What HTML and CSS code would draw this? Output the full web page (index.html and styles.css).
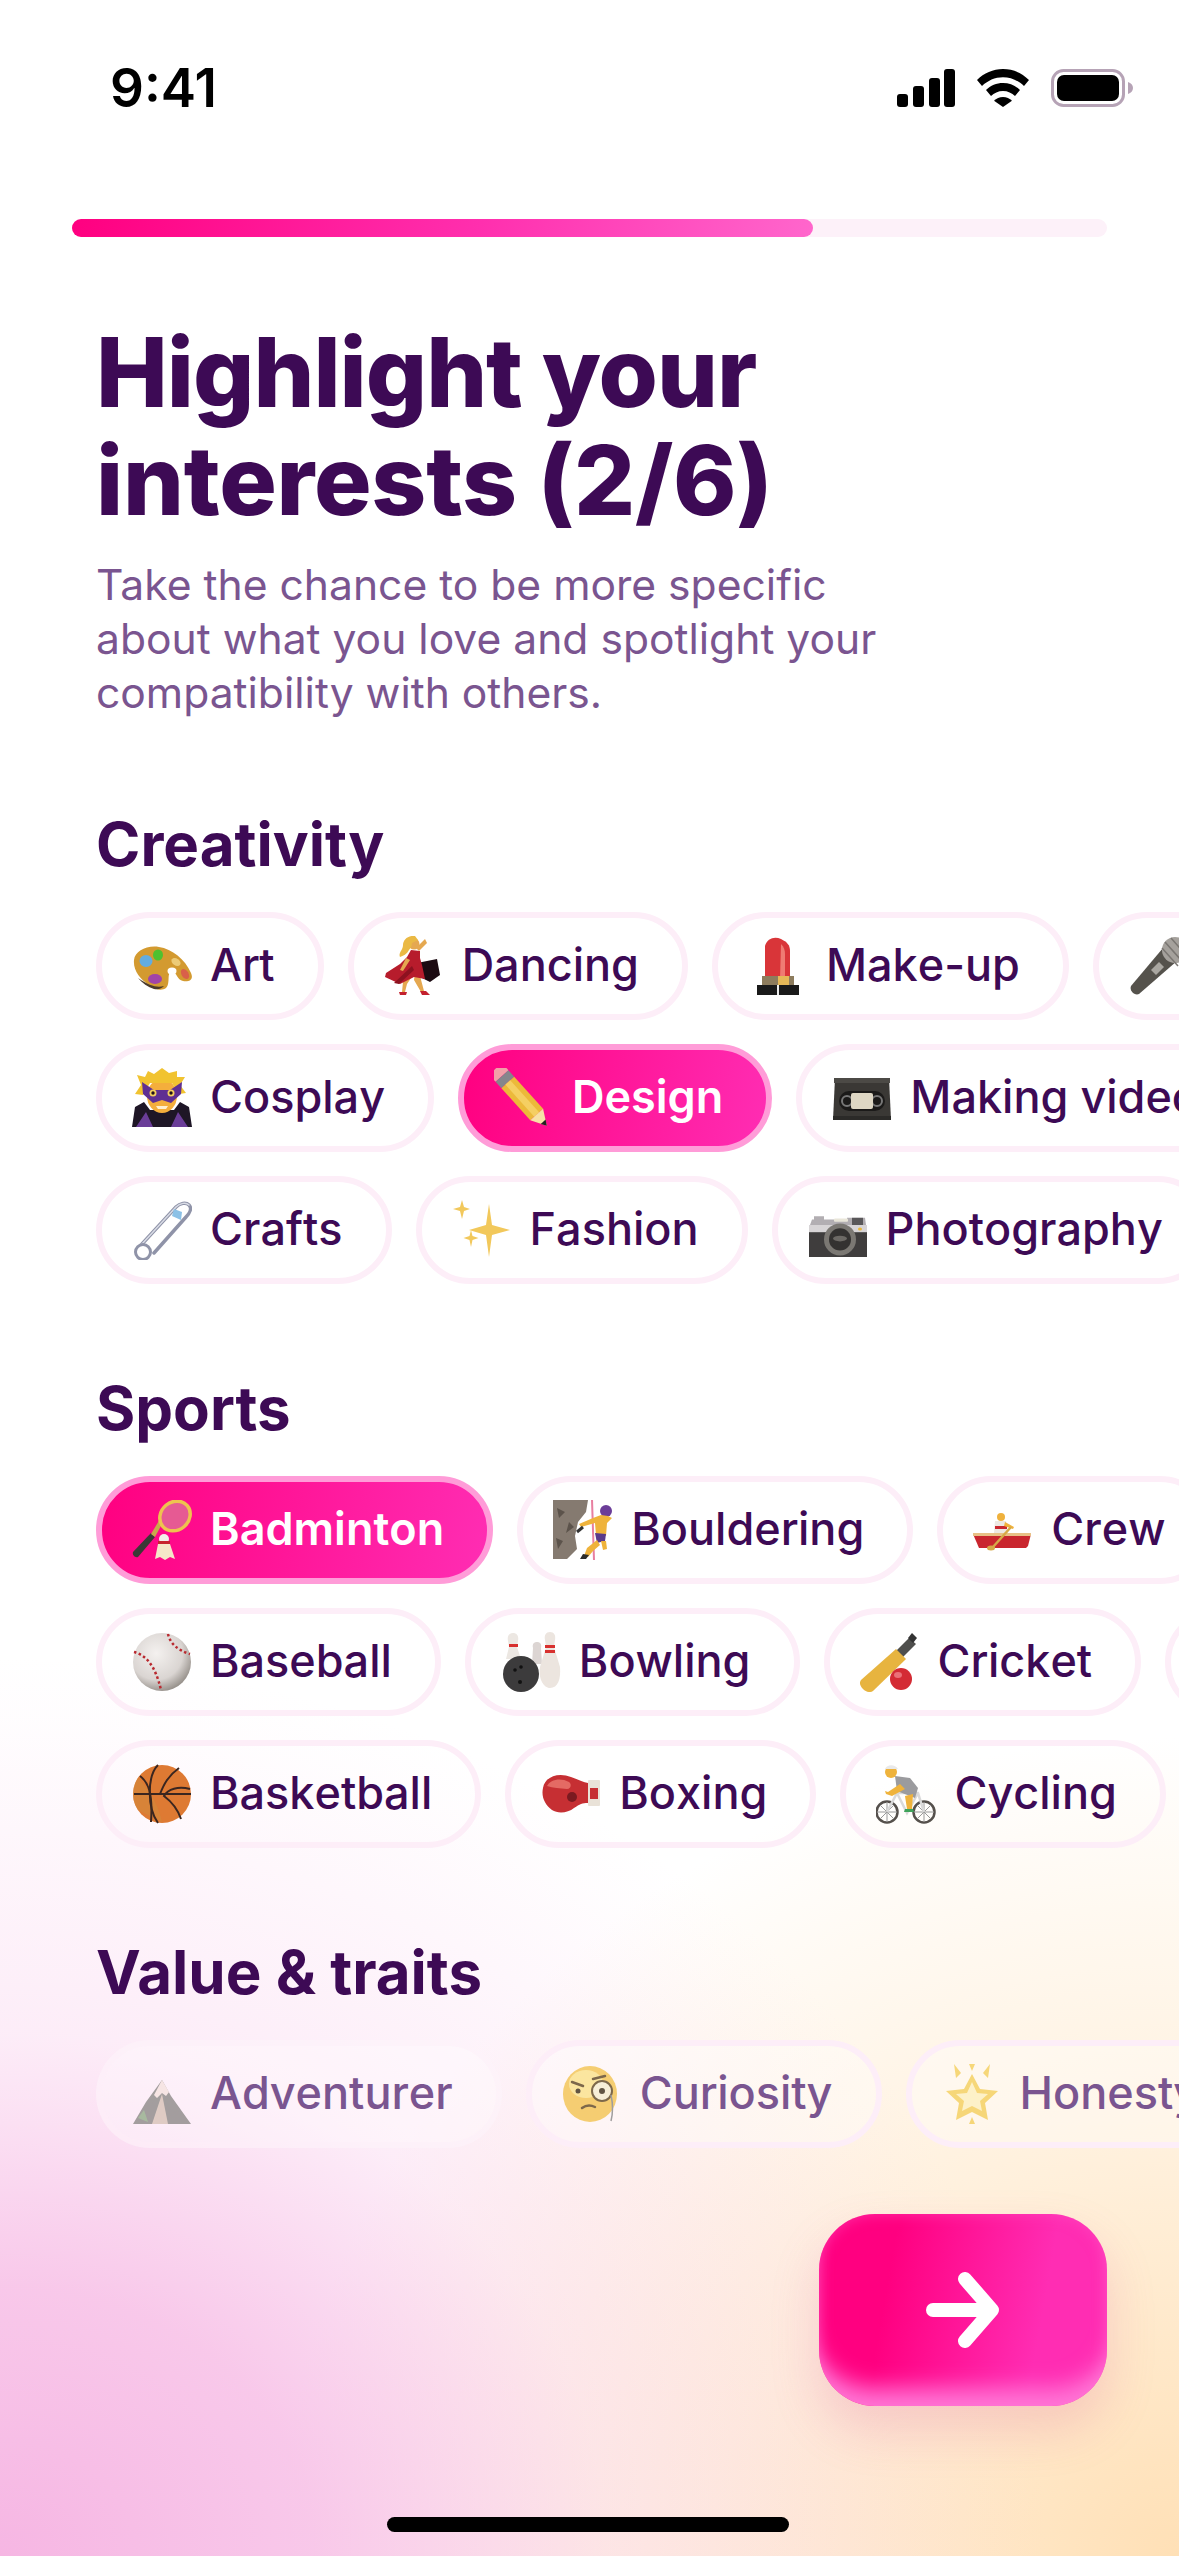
FILE: index.html
```html
<!DOCTYPE html>
<html lang="en">
<head>
    <meta charset="UTF-8">
    <meta name="viewport" content="width=device-width, initial-scale=1.0">
    <title>Highlight your interests</title>
    <link rel="stylesheet" href="styles.css">
</head>
<body>
    <div class="page">
        <div class="status-bar">
            <span class="time">9:41</span>
            <div class="status-icons">
                <svg class="signal" viewBox="0 0 58 38" width="58" height="38"><rect x="0" y="25" width="11" height="13" rx="3"/><rect x="16" y="17" width="11" height="21" rx="3"/><rect x="32" y="9" width="11" height="29" rx="3"/><rect x="47" y="0" width="11" height="38" rx="3"/></svg>
                <svg class="wifi" viewBox="0 0 52 38" width="52" height="38"><path d="M26 0C16 0 7 4 0 11l5 6c5.500-5.400 13-8.800 21-8.800s15.500 3.400 21 8.800l5-6C45 4 36 0 26 0z"/><path d="M26 14c-6.500 0-12.500 2.600-17 7l5 6c3-3 7.300-5 12-5s9 2 12 5l5-6c-4.500-4.400-10.500-7-17-7z"/><path d="M26 28c-3.500 0-6.700 1.400-9 3.700L26 38l9-6.300C32.700 29.400 29.500 28 26 28z"/></svg>
                <svg class="battery" viewBox="0 0 82 38" width="82" height="38"><rect x="1.500" y="1.500" width="71" height="35" rx="11" fill="none" stroke="#b6a3b6" stroke-width="3"/><rect x="6" y="6" width="62" height="26" rx="7"/><path d="M77 13c3 1 5 3 5 6s-2 5-5 6z" fill="#b6a3b6"/></svg>
            </div>
        </div>

        <div class="progress"><div class="progress-fill" style="width: 71.6%"></div></div>

        <div class="content">
            <h1>Highlight your<br><span class="title-count">interests (2/6)</span></h1>
            <p class="subtitle">Take the chance to be more specific<br>about what you love and spotlight your<br>compatibility with others.</p>

            <section class="group">
                <h2>Creativity</h2>
                <div class="row">
                    <div class="pill"><svg class="emoji" viewBox="0 0 60 60"><g transform="translate(0 2)"><path d="M2 22C3 13 15 7 27 9c13 2 26 12 32 26 3 7-2 9-8 8-6-1-6-9-11-9-6 0-1 11-6 16-4 3-11 2-17-3C8 41 1 32 2 22z" fill="#d39a30"/><path d="M6 40c4 5 10 9 16 11 5 1 8-1 10-3-7 2-14 0-26-8z" fill="#4b3a2a"/><ellipse cx="14" cy="23" rx="6.500" ry="6" fill="#62acdf"/><ellipse cx="26" cy="17" rx="5" ry="5.500" fill="#4fc12f"/><ellipse cx="44" cy="24" rx="5" ry="3.500" fill="#eccb78" transform="rotate(35 44 24)"/><ellipse cx="23" cy="41" rx="7" ry="5" fill="#a143a8"/><ellipse cx="53" cy="36" rx="3.500" ry="5.500" fill="#d9604a" transform="rotate(-30 53 36)"/><ellipse cx="40" cy="33" rx="4.500" ry="3.500" fill="#fff"/></g></svg><span>Art</span></div>
                    <div class="pill"><svg class="emoji" viewBox="0 0 60 60"><path d="M31 36l5 4 4 15-3 1-7-12zM24 36l5 3-6 9-2 8-3 0 1-10z" fill="#e5a850"/><path d="M15 56h8l-1 3h-6zM36 55h6l4 4h-8z" fill="#c3202e"/><path d="M33 27l20-4 3 16-10 7-12-6-3-8z" fill="#1c0b12"/><path d="M27 14l9 1 0 7 2 7 3 14-11-2-14 7-15-7 1-4 14-9 7-7z" fill="#b71c2c"/><path d="M28 30L10 47l5 1 15-14z" fill="#8c1220"/><path d="M35 15l8-8-2-4-9 9z" fill="#e5a850"/><path d="M22 22l-6 12 3 1 7-11z" fill="#e5a850"/><circle cx="30" cy="8" r="5.500" fill="#e5a850"/><path d="M31 0c-7-1-12 4-12 9s-5 8-3 12c3-1 7-3 9-7 2-2 3-5 3-7l6-3z" fill="#eab944"/></svg><span>Dancing</span></div>
                    <div class="pill"><svg class="emoji" viewBox="0 0 60 60"><path d="M17 10c2-8 10-10 16-7 6 3 9 6 9 12v28H17z" fill="#d93539"/><path d="M33 8c3 3 4 6 4 10v25h-5z" fill="#ef7b73"/><rect x="14" y="40" width="32" height="10" fill="#8d7c5d"/><rect x="30" y="40" width="11" height="10" fill="#e5b858"/><rect x="9" y="49" width="42" height="10" fill="#1a1a1a"/><rect x="29" y="49" width="2" height="10" fill="#eee"/></svg><span>Make-up</span></div>
                    <div class="pill pill-offscreen"><svg class="emoji" viewBox="0 0 60 60"><path d="M2 50l32-38 14 13-38 33c-4 2-10-3-8-8z" fill="#55524c"/><path d="M22 34l8-8 5 5-8 8z" fill="#a9a6a0"/><circle cx="46" cy="14" r="13" fill="#a5a19c"/><path d="M36 6l16 18M42 2l14 16M33 12l16 18" stroke="#7a7672" stroke-width="1.500"/></svg></div>
                </div>
                <div class="row">
                    <div class="pill"><svg class="emoji" viewBox="0 0 60 60"><path d="M0 59l3-20 9-5 6 8h24l6-8 9 5 3 20z" fill="#1e1626"/><path d="M14 44l7 15H4zM46 44l-7 15h17z" fill="#6a3d98"/><ellipse cx="30" cy="28" rx="15" ry="17" fill="#f4ae3c"/><path d="M3 26L9 17 5 7l8 2 3-6 6 3 8-6 7 5 8-2v6l8 0-5 8 6 8-7 1-7-11H18l-7 12z" fill="#f1c330"/><path d="M10 14l12 8h16l12-8-1 12-10 9-9-3-9 3-10-9z" fill="#5f2f92"/><circle cx="21" cy="25" r="3.500" fill="#f3ce5e"/><circle cx="39" cy="25" r="3.500" fill="#f3ce5e"/><circle cx="21" cy="25" r="1.700" fill="#201018"/><circle cx="39" cy="25" r="1.700" fill="#201018"/><path d="M24 38h12l-2 3h-8z" fill="#fff0d0"/></svg><span>Cosplay</span></div>
                    <div class="pill selected"><svg class="emoji" viewBox="0 0 60 60"><g transform="translate(8 8) rotate(48) scale(1.080)"><path d="M0-8h-2c-5 0-7 3-7 8s2 8 7 8h2z" fill="#f2a0a8"/><rect x="0" y="-8" width="8" height="16" fill="#86868c"/><rect x="8" y="-8" width="40" height="16" fill="#ecb93a"/><rect x="8" y="-3" width="40" height="6" fill="#f5cf62"/><path d="M48-8l14 8-14 8z" fill="#f7e2a6"/><path d="M57-3l5 3-5 3z" fill="#222"/></g></svg><span>Design</span></div>
                    <div class="pill"><svg class="emoji" viewBox="0 0 60 60"><g transform="translate(0 8)"><path d="M3 2h54l2 42H1z" fill="#3a3835"/><path d="M1 44h58v-4H1z" fill="#2b2a28"/><rect x="2" y="2" width="56" height="5" fill="#4c4a46"/><rect x="7" y="15" width="46" height="20" rx="10" fill="#1b1a19"/><circle cx="15" cy="25" r="5" fill="none" stroke="#777" stroke-width="2"/><circle cx="45" cy="25" r="5" fill="none" stroke="#777" stroke-width="2"/><rect x="19" y="17" width="22" height="16" rx="2" fill="#ded7c4"/></g></svg><span>Making videos</span></div>
                </div>
                <div class="row">
                    <div class="pill"><svg class="emoji" viewBox="0 0 60 60"><g fill="none" stroke-linecap="round"><path d="M10 44L44 7c4-4 10-5 13-2s1 8-3 12L22 53" stroke="#8f93a8" stroke-width="3.500"/><path d="M10 44L44 7c4-4 10-5 13-2" stroke="#d9dce6" stroke-width="1.500"/><circle cx="11" cy="52" r="7.500" stroke="#8f93a8" stroke-width="3"/></g><path d="M42 9l8 3-1 8-9-4z" fill="#8cc1e6"/></svg><span>Crafts</span></div>
                    <div class="pill"><svg class="emoji" viewBox="0 0 60 60"><path d="M37 4l3 21 18 5-18 5-3 22-3-22-17-5 17-5z" fill="#f2c85b"/><path d="M10 0l2 7 6 2-6 2-2 8-2-8-7-2 7-2zM19 30l1.500 6 6 2-6 2-1.500 7-1.500-7-6-2 6-2z" fill="#f2c85b"/></svg><span>Fashion</span></div>
                    <div class="pill"><svg class="emoji" viewBox="0 0 60 60"><g transform="translate(0 13) scale(1 0.800)"><path d="M2 15l2-7h2V4h10v4h23V6h18l1 9z" fill="#b2aeb2"/><rect x="1" y="15" width="58" height="14" fill="#d7d4d6"/><rect x="1" y="24" width="58" height="31" fill="#3f3d3d"/><rect x="26" y="7" width="14" height="4" rx="1" fill="#e9e6d9"/><rect x="44" y="6" width="11" height="9" fill="#595759"/><circle cx="52" cy="20" r="2" fill="#e8b73c"/><ellipse cx="32" cy="33" rx="16" ry="20" fill="#7b7873"/><ellipse cx="32" cy="33" rx="11" ry="14" fill="#343231"/><ellipse cx="32" cy="32" rx="7" ry="3.500" fill="#6c6965"/></g></svg><span>Photography</span></div>
                </div>
            </section>

            <section class="group">
                <h2>Sports</h2>
                <div class="row">
                    <div class="pill selected"><svg class="emoji" viewBox="0 0 60 60"><path d="M1 52l18-19 4 4L6 57c-3 1-6-2-5-5z" fill="#3a3a36"/><path d="M19 34l9-15 3 3-8 15z" fill="#c8a94b"/><ellipse cx="43" cy="16" rx="16" ry="14" fill="#e65a93" stroke="#eec24f" stroke-width="3.500" transform="rotate(-40 43 16)"/><path d="M26 44h12l5 15-5-2-5 3-5-3-5 2z" fill="#f5e7c9"/><circle cx="32" cy="39" r="5" fill="#f2efe9"/><rect x="26" y="41" width="12" height="3" fill="#c7242e"/></svg><span>Badminton</span></div>
                    <div class="pill"><svg class="emoji" viewBox="0 0 60 60"><path d="M0 0h35l-2 12-8 10-3 14 2 13-10 10H0z" fill="#857a70"/><path d="M4 8l8 4-6 6zM16 22l5 5-8 6zM3 38l7 3-5 8z" fill="#5c534b"/><path d="M39 0l2 60" stroke="#e87fa0" stroke-width="2"/><circle cx="53" cy="11" r="6" fill="#6b3d98"/><path d="M48 15l-8 3-14 6 2 3 14-4 1 12 10 1 1-13 5-5-4-2z" fill="#efb33b"/><path d="M30 27l-6 5" stroke="#333" stroke-width="3"/><path d="M42 33l11 1-1 7-8 2z" fill="#5a3a8a"/><path d="M44 40l-10 8-3 8 4 1 5-6 7-6zM48 41l2 9 4-1-1-8z" fill="#efb33b"/><path d="M30 54l6 1-3 4h-6z" fill="#2c2c2c"/></svg><span>Bouldering</span></div>
                    <div class="pill"><svg class="emoji" viewBox="0 0 60 60"><path d="M0 34h58l-3 12-2 2H6z" fill="#c9262e"/><path d="M0 33h58v3H0z" fill="#e8c086"/><circle cx="28" cy="17" r="4" fill="#efb13c"/><path d="M22 21h11l2 12H21z" fill="#ede8e2"/><path d="M22 26h12v3H22z" fill="#c9262e"/><path d="M32 22l9 5-1 2-9-3z" fill="#efb13c"/><path d="M38 27L20 47" stroke="#d6a948" stroke-width="2.500"/><ellipse cx="18" cy="48" rx="4" ry="2.500" fill="#d6a948"/></svg><span>Crew</span></div>
                </div>
                <div class="row">
                    <div class="pill"><svg class="emoji" viewBox="0 0 60 60"><defs><radialGradient id="ballShade" cx="40%" cy="35%" r="70%"><stop offset="0" stop-color="#f4f1ef"/><stop offset="0.650" stop-color="#dad5d2"/><stop offset="1" stop-color="#8e8882"/></radialGradient></defs><circle cx="30" cy="30" r="29" fill="url(#ballShade)"/><g fill="none" stroke="#b92a30" stroke-width="2.500" stroke-dasharray="2.500 2.500"><path d="M2 20c11 3 21 12 27 38"/><path d="M36 2c2 9 9 16 22 20"/></g></svg><span>Baseball</span></div>
                    <div class="pill"><svg class="emoji" viewBox="0 0 60 60"><path d="M12 1c4 0 6 3 5 8l-1 6 4 12-15 0 3-12-1-6c-1-5 1-8 5-8z" fill="#ece7e2"/><rect x="8" y="12" width="9" height="3" fill="#d8312f"/><path d="M36 10c3 0 5 2 4 6l1 16H31l1-16c-1-4 1-6 4-6z" fill="#dcd5d3"/><path d="M49 0c4 0 6 3 5 8l-1 7 6 20c1 12-2 21-10 21-6 0-12-9-10-21l6-20-1-7c-1-5 1-8 5-8z" fill="#ece5df"/><rect x="44" y="13" width="10" height="3" fill="#d8312f"/><rect x="44" y="18" width="10" height="3" fill="#d8312f"/><circle cx="20" cy="42" r="18" fill="#3c3b3c"/><circle cx="14" cy="38" r="1.800" fill="#111"/><circle cx="20" cy="35" r="1.800" fill="#111"/><circle cx="19" cy="50" r="2" fill="#111"/></svg><span>Bowling</span></div>
                    <div class="pill"><svg class="emoji" viewBox="0 0 60 60"><path d="M49 6l7 6-15 15-7-6z" fill="#4f4f4d"/><path d="M52 1l5 5-4 5-5-5z" fill="#333"/><path d="M36 17l10 10L13 59c-3 2-7 1-10-2s-4-6-2-9z" fill="#e7b43f"/><circle cx="41" cy="47" r="11" fill="#d42b34"/><ellipse cx="38" cy="43" rx="4" ry="3" fill="#ea7178"/></svg><span>Cricket</span></div>
                    <div class="pill pill-offscreen"></div>
                </div>
                <div class="row">
                    <div class="pill"><svg class="emoji" viewBox="0 0 60 60"><circle cx="30" cy="30" r="29" fill="#de7a33"/><path d="M6 46a28 28 0 0 1 0-32c8 8 20 24 24 44z" fill="#d2893c" opacity=".6"/><g fill="none" stroke="#3a2620" stroke-width="2"><path d="M2 30h57"/><path d="M26 1C15 12 15 44 26 59"/><path d="M8 12c8 6 13 16 11 46"/><path d="M47 4C36 12 32 20 28 30M58 25c-12-3-22 0-26 7 8 6 14 14 17 23"/></g></svg><span>Basketball</span></div>
                    <div class="pill"><svg class="emoji" viewBox="0 0 60 60"><path d="M2 24C4 12 18 8 30 13c6 2 12 5 17 6v20c-6 0-8 1-14 5-6 5-16 6-22 2C4 41 0 33 2 24z" fill="#c62f33"/><path d="M6 22c3-6 13-9 22-4 3 2 2 7-2 7-7-1-14-1-20-3z" fill="#e46a64"/><circle cx="31" cy="33" r="5" fill="#7b1a20"/><rect x="47" y="16" width="12" height="26" rx="1" fill="#e9e2d8"/><rect x="49" y="24" width="8" height="11" fill="#c62f33"/></svg><span>Boxing</span></div>
                    <div class="pill"><svg class="emoji" viewBox="0 0 60 60"><g fill="none"><circle cx="11" cy="48" r="10.500" stroke="#55504c" stroke-width="2.500"/><circle cx="48" cy="48" r="10.500" stroke="#55504c" stroke-width="2.500"/><path d="M1 48h20M11 38v20M4 41l14 14M18 41L4 55M38 48h20M48 38v20M41 41l14 14M55 41L41 55" stroke="#999" stroke-width="1"/><path d="M11 48l10-19 21 0 6 19M21 29l10 20 11-20" stroke="#d9d9d9" stroke-width="2.500"/></g><circle cx="15" cy="8" r="6" fill="#efb33c"/><path d="M9 5c2-5 10-5 13 0z" fill="#e9e9e9"/><path d="M19 12l15 2 8 10-3 10-18-7z" fill="#9b9b9e"/><path d="M24 20l-12 8-3-1 1 3 6 2 13-7z" fill="#efb33c"/><path d="M37 30l-8 2 2 13 5 0z" fill="#efb33c"/><path d="M29 45h8l1 3H28z" fill="#3fa35a"/></svg><span>Cycling</span></div>
                </div>
            </section>

            <section class="group faded">
                <h2>Value &amp; traits</h2>
                <div class="row">
                    <div class="pill"><svg class="emoji" viewBox="0 0 60 60"><path d="M30 16l9 16 20 28H1l13-22z" fill="#8d8a88"/><path d="M30 16l7 12-3 4-4-3-5 5-3-3z" fill="#f5e3e0"/><path d="M30 30l6 30H20z" fill="#d8c3b8"/><path d="M6 54l6-8 4 12z" fill="#93ad8a"/></svg><span>Adventurer</span></div>
                    <div class="pill"><svg class="emoji" viewBox="0 0 60 60"><ellipse cx="28" cy="30" rx="27" ry="28" fill="#f3c451"/><ellipse cx="24" cy="20" rx="17" ry="14" fill="#fbe28a"/><path d="M10 18l11 4M31 15l12-3" stroke="#5d4520" stroke-width="2.500" stroke-linecap="round"/><circle cx="16" cy="27" r="2.500" fill="#3b2c17"/><circle cx="40" cy="27" r="10" fill="#f6edd0" stroke="#5d4520" stroke-width="2"/><circle cx="40" cy="27" r="3" fill="#3b2c17"/><path d="M20 44c4-3 9-3 13-1" fill="none" stroke="#5d4520" stroke-width="2.500" stroke-linecap="round"/><path d="M49 31c2 9 2 18 0 26" fill="none" stroke="#888" stroke-width="1.500"/></svg><span>Curiosity</span></div>
                    <div class="pill"><svg class="emoji" viewBox="0 0 60 60"><path d="M30 10l8 15 18 2-13 12 3 17-16-8-16 8 3-17L4 27l18-2z" fill="#f5cf5c"/><path d="M30 18l5 11 11 1-8 7 2 10-10-5-10 5 2-10-8-7 11-1z" fill="#fdf0c0"/><path d="M12 0l7 9-5 5zM48 0l-7 9 5 5zM27 0h6l-3 7zM27 60l3-7 3 7z" fill="#f5cf5c"/></svg><span>Honesty</span></div>
                </div>
            </section>
        </div>

        <button class="next" type="button">
            <svg viewBox="0 0 74 76" width="74" height="76" fill="none" stroke="#fff" stroke-width="14" stroke-linecap="round" stroke-linejoin="round"><path d="M7 38h58"/><path d="M39 7l27 31-27 31"/></svg>
        </button>
        <div class="home-bar"></div>
    </div>
</body>
</html>
```

FILE: styles.css
```css
* {
    box-sizing: border-box;
}
html, body {
    margin: 0;
    padding: 0;
}
body {
    font-family: 'Inter', 'Liberation Sans', sans-serif;
    color: #3d0a55;
    background: #fff;
}
.page {
    position: relative;
    width: 1179px;
    height: 2556px;
    overflow: hidden;
    background:
        radial-gradient(ellipse 1050px 900px at 0% 100%, #f6b6e3 0%, rgba(246,182,227,0.75) 30%, rgba(246,182,227,0.25) 58%, rgba(246,182,227,0.03) 93%, rgba(246,182,227,0) 100%),
        radial-gradient(ellipse 900px 820px at 100% 100%, #ffe0b6 0%, rgba(255,224,182,0.45) 52%, rgba(255,224,182,0) 100%),
        #fff;
}
.status-bar {
    display: flex;
    justify-content: space-between;
    align-items: center;
    height: 38px;
    margin-top: 69px;
    padding: 0 46px 0 110px;
}
.time {
    font-size: 53px;
    font-weight: 600;
    color: #000;
}
.status-icons {
    display: flex;
    align-items: center;
    gap: 22px;
}
.progress {
    height: 18px;
    margin: 112px 72px 0;
    border-radius: 9px;
    background: #fdf1f9;
}
.progress-fill {
    height: 100%;
    border-radius: 9px;
    background: linear-gradient(100deg, #ff0080 0%, #ff2fae 55%, #ff66cc 100%);
}
.content {
    padding: 81px 0 0 96px;
}
h1 {
    margin: 0;
    font-size: 96px;
    line-height: 108px;
    font-weight: 800;
    letter-spacing: -1px;
}
.title-count {
    letter-spacing: -0.25px;
}
.subtitle {
    margin: 24px 0 0;
    font-size: 42.6px;
    line-height: 54px;
    color: #7a5590;
}
.group {
    margin-top: 88px;
}
h2 {
    margin: 0 0 32px;
    font-size: 60px;
    line-height: 72px;
    font-weight: 700;
}
.row {
    display: flex;
    gap: 24px;
    margin-top: 24px;
}
h2 + .row {
    margin-top: 0;
}
.pill {
    flex: none;
    display: flex;
    align-items: center;
    gap: 18px;
    height: 108px;
    padding: 0 43px 3px 30px;
    border: 6px solid #fdeef8;
    border-radius: 54px;
    font-size: 45px;
    font-weight: 500;
    font-kerning: none;
    white-space: nowrap;
}
.pill-offscreen {
    width: 240px;
}
.emoji {
    flex: none;
    width: 60px;
    height: 60px;
    margin-bottom: -3px;
}
.pill.selected {
    border-color: #ff9cd8;
    color: #fff;
    font-weight: 600;
    background: linear-gradient(100deg, #ff0080 0%, #ff2db3 100%);
}
.faded .pill {
    color: #7a5590;
    background: rgba(255,255,255,0.35);
}
.faded .pill:first-child {
    border-color: rgba(253,238,248,0.4);
}
.faded .emoji {
    opacity: 0.8;
}
.next {
    position: absolute;
    left: 819px;
    top: 2214px;
    width: 288px;
    height: 192px;
    padding: 0;
    border: none;
    border-radius: 56px;
    background: linear-gradient(100deg, #ff0080 25%, #ff2db3 75%);
    box-shadow: inset 0 -28px 22px -10px rgba(255,120,215,0.95), inset 0 0 14px rgba(255,90,200,0.5), 0 24px 48px rgba(220,90,150,0.22);
    display: flex;
    align-items: center;
    justify-content: center;
}
.home-bar {
    position: absolute;
    left: 387px;
    top: 2517px;
    width: 402px;
    height: 15px;
    border-radius: 8px;
    background: #000;
}
```
